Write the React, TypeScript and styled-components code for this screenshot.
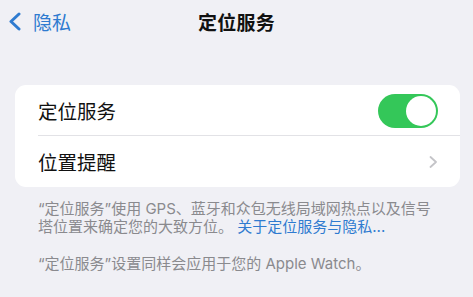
import { createGlobalStyle, styled } from 'styled-components';

const GlobalStyle = createGlobalStyle`
  body {
    margin: 0;
    background: #f0f0f5;
    font-family: Inter, "Noto Sans CJK SC", sans-serif;
  }
`;

const Page = styled.div`
  width: 100%;
  height: 297px;
  background: #f0f0f5;
  overflow: hidden;
`;

const NavBar = styled.div`
  display: grid;
  grid-template-columns: 1fr auto 1fr;
  align-items: center;
  height: 42px;
`;

const BackButton = styled.div`
  display: flex;
  align-items: center;
  gap: 12px;
  padding-left: 8px;
  color: #2f7bd0;
  font-size: 19px;
`;

const Title = styled.div`
  font-size: 19px;
  font-weight: 700;
  color: #111;
  letter-spacing: 0.3px;
`;

const Card = styled.div`
  margin: 43px 13px 0 15px;
  background: #fff;
  border-radius: 11px;
  overflow: hidden;
`;

const Row = styled.div<{ $divider?: boolean }>`
  position: relative;
  display: flex;
  align-items: center;
  justify-content: space-between;
  height: 51px;
  padding: 0 22px 0 23px;
  font-size: 19.5px;
  color: #111;
  &::after {
    content: '';
    display: ${(p) => (p.$divider ? 'block' : 'none')};
    position: absolute;
    left: 23px;
    right: 0;
    bottom: 0;
    height: 1px;
    background: #e2e2e6;
  }
`;

const Toggle = styled.div<{ $on: boolean }>`
  position: relative;
  width: 60px;
  height: 34px;
  border-radius: 17px;
  background: ${(p) => (p.$on ? '#34c759' : '#e9e9ea')};
  &::after {
    content: '';
    position: absolute;
    top: 2px;
    left: ${(p) => (p.$on ? '28px' : '2px')};
    width: 30px;
    height: 30px;
    border-radius: 50%;
    background: #fff;
  }
`;

const Footer = styled.div`
  padding: 13px 30px 0 38px;
  font-size: 15px;
  line-height: 17.5px;
  color: #8a8a8e;
`;

const Note = styled.p`
  margin: 0 0 20px;
`;

const Link = styled.span`
  color: #2f7bd0;
`;

function BackChevron() {
  return (
    <svg width="13" height="19" viewBox="0 0 13 19">
      <path
        d="M11 2 L3 9.5 L11 17"
        fill="none"
        stroke="#2f7bd0"
        strokeWidth="3"
        strokeLinecap="round"
        strokeLinejoin="round"
      />
    </svg>
  );
}

function RowChevron() {
  return (
    <svg width="9" height="12" viewBox="0 0 9 12">
      <path
        d="M1.5 1 L7 6 L1.5 11"
        fill="none"
        stroke="#c4c4c8"
        strokeWidth="1.8"
        strokeLinecap="round"
        strokeLinejoin="round"
      />
    </svg>
  );
}

export default function App() {
  return (
    <Page>
      <GlobalStyle />
      <NavBar>
        <BackButton>
          <BackChevron />
          <span>隐私</span>
        </BackButton>
        <Title>定位服务</Title>
        <div />
      </NavBar>

      <Card>
        <Row $divider>
          <span>定位服务</span>
          <Toggle $on />
        </Row>
        <Row>
          <span>位置提醒</span>
          <RowChevron />
        </Row>
      </Card>

      <Footer>
        <Note>
          “定位服务”使用 GPS、蓝牙和众包无线局域网热点以及信号
          <br />
          塔位置来确定您的大致方位。 <Link>关于定位服务与隐私...</Link>
        </Note>
        <Note>“定位服务”设置同样会应用于您的 Apple Watch。</Note>
      </Footer>
    </Page>
  );
}
